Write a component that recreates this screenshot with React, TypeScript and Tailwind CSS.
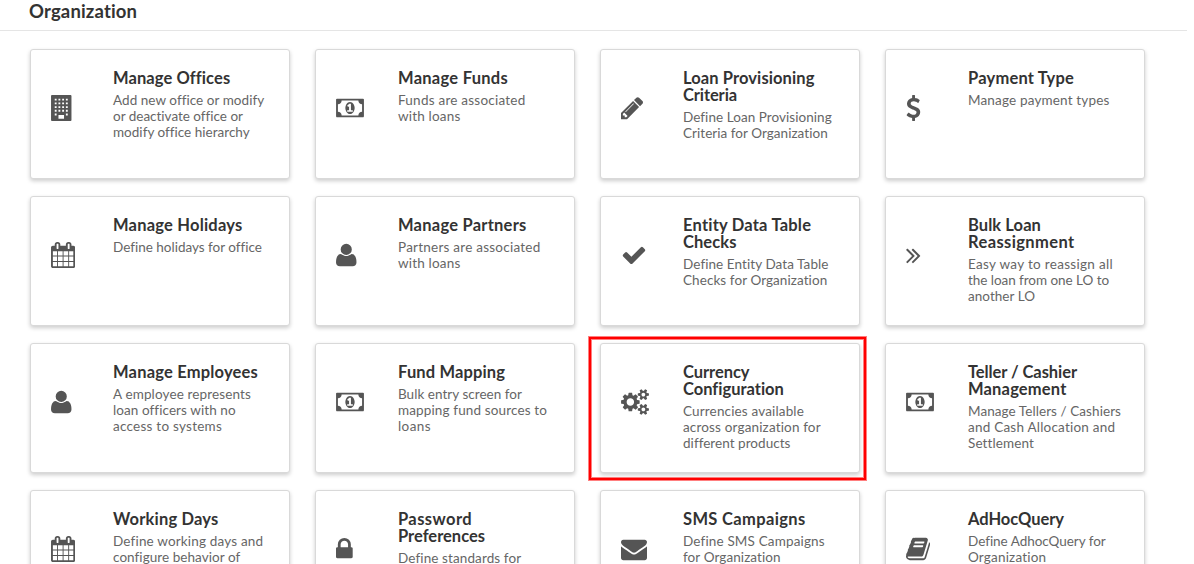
import { useLayoutEffect, useRef } from "react";

type Line = [text: string, width: number];
type IconName = keyof typeof glyphs;
type Item = { icon: IconName; title: Line[]; body: Line[]; marked?: boolean };

const glyphs = {
  building: {
    box: "0 0 1408 1792",
    width: "w-[20.5px]",
    d: "M64 0h1280q64 0 64 64v1664q0 64-64 64h-1280q-64 0-64-64v-1664q0-64 64-64zM256 256v128h128v-128zM512 256v128h128v-128zM768 256v128h128v-128zM1024 256v128h128v-128zM256 512v128h128v-128zM512 512v128h128v-128zM768 512v128h128v-128zM1024 512v128h128v-128zM256 768v128h128v-128zM512 768v128h128v-128zM768 768v128h128v-128zM1024 768v128h128v-128zM256 1024v128h128v-128zM512 1024v128h128v-128zM768 1024v128h128v-128zM1024 1024v128h128v-128zM256 1280v128h128v-128zM1024 1280v128h128v-128zM512 1376v256h384v-256z",
  },
  money: {
    box: "0 128 1920 1792",
    width: "w-[28px]",
    d: "M768 1280h384v-96h-128v-448h-114l-148 137 77 80q42-37 55-57h2v288h-128v96zm512-256q0 70-21 142t-59.5 134-101.5 101-138 39-138-39-101.5-101-59.5-134-21-142 21-142 59.5-134 101.5-101 138-39 138 39 101.5 101 59.5 134 21 142zm512 256v-512q-106 0-181-75t-75-181h-1152q0 106-75 181t-181 75v512q106 0 181 75t75 181h1152q0-106 75-181t181-75zm128-832v1152q0 26-19 45t-45 19h-1792q-26 0-45-19t-19-45v-1152q0-26 19-45t45-19h1792q26 0 45 19t19 45z",
  },
  pencil: {
    box: "128 0 1536 1792",
    width: "w-[22.3px]",
    d: "M491 1536l91-91-235-235-91 91v107h128v128h107zm523-928q0-22-22-22-10 0-17 7l-542 542q-7 7-7 17 0 22 22 22 10 0 17-7l542-542q7-7 7-17zm-54-192l416 416-832 832h-416v-416zm683 96q0 53-37 90l-166 166-416-416 166-165q36-38 90-38 53 0 91 38l235 234q37 39 37 91z",
  },
  dollar: {
    box: "384 0 1024 1792",
    width: "w-[14.9px]",
    d: "M1362 1185q0 153-99.5 263.5t-258.5 136.5v175q0 14-9 23t-23 9h-135q-13 0-22.5-9.5t-9.5-22.5v-175q-66-9-127.5-31t-101.5-44.5-74-48-46.5-37.5-17.5-18q-17-21-2-41l103-135q7-10 23-12 15-2 24 9l2 2q113 99 243 125 37 8 74 8 81 0 142.5-43t61.5-122q0-28-15-53t-33.5-42-58.5-37.5-66-32-80-32.5q-39-16-61.5-25t-61.5-26.5-62.5-31-56.5-35.5-53.5-42.5-43.5-49-35.5-58-21-66.5-8.5-78q0-138 98-242t255-134v-180q0-13 9.5-22.5t22.5-9.5h135q14 0 23 9t9 23v176q57 6 110.5 23t87 33.5 63.5 37.5 39 29 15 14q17 18 5 38l-81 146q-8 15-23 16-14 3-27-7-3-3-14.5-12t-39-26.5-58.5-32-74.5-26-85.5-11.5q-95 0-155 43t-60 111q0 26 8.5 48t29.5 41.5 39.5 33 56 31 60.5 27 70 27.5q53 20 81 31.5t76 35 75.5 42.5 62 50 53 63.5 31.5 76.5 13 94z",
  },
  calendar: {
    box: "64 0 1664 1792",
    width: "w-[24.2px]",
    d: "M192 1664h288v-288h-288v288zm352 0h320v-288h-320v288zm-352-352h288v-320h-288v320zm352 0h320v-320h-320v320zm-352-384h288v-288h-288v288zm736 736h320v-288h-320v288zm-384-736h320v-288h-320v288zm768 736h288v-288h-288v288zm-384-352h320v-320h-320v320zm-352-864v-288q0-13-9.5-22.5t-22.5-9.5h-64q-13 0-22.5 9.5t-9.5 22.5v288q0 13 9.5 22.5t22.5 9.5h64q13 0 22.5-9.5t9.5-22.5zm736 864h288v-320h-288v320zm-384-384h320v-288h-320v288zm384 0h288v-288h-288v288zm32-480v-288q0-13-9.5-22.5t-22.5-9.5h-64q-13 0-22.5 9.5t-9.5 22.5v288q0 13 9.5 22.5t22.5 9.5h64q13 0 22.5-9.5t9.5-22.5zm384-64v1280q0 52-38 90t-90 38h-1408q-52 0-90-38t-38-90v-1280q0-52 38-90t90-38h128v-96q0-66 47-113t113-47h64q66 0 113 47t47 113v96h384v-96q0-66 47-113t113-47h64q66 0 113 47t47 113v96h128q52 0 90 38t38 90z",
  },
  user: {
    box: "192 0 1408 1792",
    width: "w-[20.5px]",
    d: "M1600 1405q0 120-73 189.5t-194 69.5h-874q-121 0-194-69.5t-73-189.5q0-53 3.5-103.5t14-109 26.5-108.5 43-97.5 62-81 85.5-53.5 111.5-20q9 0 42 21.5t74.5 48 108 48 133.5 21.5 133.5-21.5 108-48 74.5-48 42-21.5q61 0 111.5 20t85.5 53.5 62 81 43 97.5 26.5 108.5 14 109 3.5 103.5zm-320-893q0 159-112.5 271.5t-271.5 112.5-271.5-112.5-112.5-271.5 112.5-271.5 271.5-112.5 271.5 112.5 112.5 271.5z",
  },
  check: {
    box: "0 0 1792 1792",
    width: "w-[26px]",
    d: "M1671 566q0 40-28 68l-724 724-136 136q-28 28-68 28t-68-28l-136-136-362-362q-28-28-28-68t28-68l136-136q28-28 68-28t68 28l294 295 656-657q28-28 68-28t68 28l136 136q28 28 28 68z",
  },
  chevrons: {
    box: "384 0 1024 1792",
    width: "w-[14.9px]",
    d: "M979 960q0 13-10 23l-466 466q-10 10-23 10t-23-10l-50-50q-10-10-10-23t10-23l393-393-393-393q-10-10-10-23t10-23l50-50q10-10 23-10t23 10l466 466q10 10 10 23zm384 0q0 13-10 23l-466 466q-10 10-23 10t-23-10l-50-50q-10-10-10-23t10-23l393-393-393-393q-10-10-10-23t10-23l50-50q10-10 23-10t23 10l466 466q10 10 10 23z",
  },
  cogs: {
    box: "0 0 1920 1792",
    width: "w-[28px]",
    d: "M896 896q0-106-75-181t-181-75-181 75-75 181 75 181 181 75 181-75 75-181zm768 512q0-52-38-90t-90-38-90 38-38 90q0 53 37.5 90.5t90.5 37.5 90.5-37.5 37.5-90.5zm0-1024q0-52-38-90t-90-38-90 38-38 90q0 53 37.5 90.5t90.5 37.5 90.5-37.5 37.5-90.5zm-384 421v185q0 10-7 19.5t-16 10.5l-155 24q-11 35-32 76 34 48 90 115 7 11 7 20 0 12-7 19-23 30-82.5 89.5t-78.5 59.5q-11 0-21-7l-115-90q-37 19-77 31-11 108-23 155-7 24-30 24h-186q-11 0-20-7.5t-10-17.5l-23-153q-34-10-75-31l-118 89q-7 7-20 7-11 0-21-8-144-133-144-160 0-9 7-19 10-14 41-53t47-61q-23-44-35-82l-152-24q-10-1-17-9.5t-7-19.5v-185q0-10 7-19.5t16-10.5l155-24q11-35 32-76-34-48-90-115-7-11-7-20 0-12 7-20 22-30 82-89t79-59q11 0 21 7l115 90q34-18 77-32 11-108 23-154 7-24 30-24h186q11 0 20 7.5t10 17.5l23 153q34 10 75 31l118-89q8-7 20-7 11 0 21 8 144 133 144 160 0 8-7 19-12 16-42 54t-45 60q23 48 34 82l152 23q10 2 17 10.5t7 19.5zm640 533v140q0 16-149 31-12 27-30 52 51 113 51 138 0 4-4 7-122 71-124 71-8 0-46-47t-52-68q-20 2-30 2t-30-2q-14 21-52 68t-46 47q-2 0-124-71-4-3-4-7 0-25 51-138-18-25-30-52-149-15-149-31v-140q0-16 149-31 13-29 30-52-51-113-51-138 0-4 4-7 4-2 35-20t59-34 30-16q8 0 46 46.5t52 67.5q20-2 30-2t30 2q51-71 92-112l6-2q4 0 124 70 4 3 4 7 0 25-51 138 17 23 30 52 149 15 149 31zm0-1024v140q0 16-149 31-12 27-30 52 51 113 51 138 0 4-4 7-122 71-124 71-8 0-46-47t-52-68q-20 2-30 2t-30-2q-14 21-52 68t-46 47q-2 0-124-71-4-3-4-7 0-25 51-138-18-25-30-52-149-15-149-31v-140q0-16 149-31 13-29 30-52-51-113-51-138 0-4 4-7 4-2 35-20t59-34 30-16q8 0 46 46.5t52 67.5q20-2 30-2t30 2q51-71 92-112l6-2q4 0 124 70 4 3 4 7 0 25-51 138 17 23 30 52 149 15 149 31z",
  },
  lock: {
    box: "320 0 1152 1792",
    width: "w-[16.7px]",
    d: "M640 768h512v-192q0-106-75-181t-181-75-181 75-75 181v192zm832 96v576q0 40-28 68t-68 28h-960q-40 0-68-28t-28-68v-576q0-40 28-68t68-28h32v-192q0-184 132-316t316-132 316 132 132 316v192h32q40 0 68 28t28 68z",
  },
  envelope: {
    box: "0 0 1792 1792",
    width: "w-[26px]",
    d: "M1792 710v794q0 66-47 113t-113 47h-1472q-66 0-113-47t-47-113v-794q44 49 101 87 362 246 497 345 57 42 92.5 65.5t94.5 48 110 24.5h2q51 0 110-24.5t94.5-48 92.5-65.5q170-123 498-345 57-39 100-87zm0-294q0 79-49 151t-122 123q-376 261-468 325-10 7-42.5 31t-54 38.5-52 32.5-57.5 27-50 9h-2q-23 0-50-9t-57.5-27-52-32.5-54-38.5-42.5-31q-91-64-262-182.5t-205-142.5q-62-42-117-115.5t-55-136.5q0-78 41.5-130t118.5-52h1472q65 0 112.5 47t47.5 113z",
  },
  book: {
    box: "64 0 1664 1792",
    width: "w-[24.2px]",
    d: "M1703 478q40 57 18 129l-275 906q-19 64-76.5 107.5t-122.5 43.5h-923q-77 0-148.5-53.5t-99.5-131.5q-24-67-2-127 0-4 3-27t4-37q1-8-3-21.5t-3-19.5q2-11 8-21t16.5-23.5 16.5-23.5q23-38 45-91.5t30-91.5q3-10 .5-30t-.5-28q3-11 17-28t17-23q21-36 42-92t25-90q1-9-2.5-32t.5-28q4-13 22-30.5t22-22.5q19-26 42.5-84.5t27.5-96.5q1-8-3-25.5t-2-26.5q2-8 9-18t18-23 17-21q8-12 16.5-30.5t15-35 16-36 19.5-32 26.5-23.5 36-11.5 47.5 5.5l-1 3q38-9 51-9h761q74 0 114 56t18 130l-274 906q-36 119-71.5 153.5t-128.5 34.5h-869q-27 0-38 15-11 16-1 43 24 70 144 70h923q29 0 56-15.5t35-41.5l300-987q7-22 5-57 38 15 59 43zm-1064 2q-4 13 2 22.5t20 9.5h608q13 0 25.5-9.5t16.5-22.5l21-64q4-13-2-22.5t-20-9.5h-608q-13 0-25.5 9.5t-16.5 22.5zm-83 256q-4 13 2 22.5t20 9.5h608q13 0 25.5-9.5t16.5-22.5l21-64q4-13-2-22.5t-20-9.5h-608q-13 0-25.5 9.5t-16.5 22.5z",
  },
};

const items: Item[] = [
  { icon: "building", title: [["Manage Offices", 116.5]], body: [["Add new office or modify", 150.5], ["or deactivate office or", 129.5], ["modify office hierarchy", 136]] },
  { icon: "money", title: [["Manage Funds", 110]], body: [["Funds are associated", 127.5], ["with loans", 62.5]] },
  { icon: "pencil", title: [["Loan Provisioning", 131.5], ["Criteria", 54]], body: [["Define Loan Provisioning", 148.5], ["Criteria for Organization", 145]] },
  { icon: "dollar", title: [["Payment Type", 106]], body: [["Manage payment types", 141.5]] },
  { icon: "calendar", title: [["Manage Holidays", 129.5]], body: [["Define holidays for office", 148]] },
  { icon: "user", title: [["Manage Partners", 128.5]], body: [["Partners are associated", 142.5], ["with loans", 62.5]] },
  { icon: "check", title: [["Entity Data Table", 128.5], ["Checks", 53.5]], body: [["Define Entity Data Table", 145.5], ["Checks for Organization", 144.5]] },
  { icon: "chevrons", title: [["Bulk Loan", 73], ["Reassignment", 106.5]], body: [["Easy way to reassign all", 145], ["the loan from one LO to", 141], ["another LO", 67]] },
  { icon: "user", title: [["Manage Employees", 145]], body: [["A employee represents", 138], ["loan officers with no", 122], ["access to systems", 109]] },
  { icon: "money", title: [["Fund Mapping", 107]], body: [["Bulk entry screen for", 124], ["mapping fund sources to", 149], ["loans", 33]] },
  { icon: "cogs", title: [["Currency", 66.5], ["Configuration", 101]], body: [["Currencies available", 121], ["across organization for", 138], ["different products", 107]], marked: true },
  { icon: "money", title: [["Teller / Cashier", 109], ["Management", 98.5]], body: [["Manage Tellers / Cashiers", 153], ["and Cash Allocation and", 147.5], ["Settlement", 65.5]] },
  { icon: "calendar", title: [["Working Days", 105.5]], body: [["Define working days and", 150], ["configure behavior of", 127]] },
  { icon: "lock", title: [["Password", 74], ["Preferences", 87]], body: [["Define standards for", 123]] },
  { icon: "envelope", title: [["SMS Campaigns", 122.5]], body: [["Define SMS Campaigns", 141.5], ["for Organization", 98]] },
  { icon: "book", title: [["AdHocQuery", 96]], body: [["Define AdhocQuery for", 137.5], ["Organization", 78.5]] },
];

/** One line of text whose tracking is adjusted to fill the given width. */
function FittedLine({ text, width }: { text: string; width: number }) {
  const ref = useRef<HTMLSpanElement>(null);
  useLayoutEffect(() => {
    const el = ref.current;
    if (!el) return;
    el.style.letterSpacing = "0px";
    const natural = el.getBoundingClientRect().width;
    el.style.letterSpacing = `${(width - natural) / text.length}px`;
  }, [text, width]);
  return (
    <span className="block">
      <span ref={ref} className="whitespace-nowrap">{text}</span>
    </span>
  );
}

function Icon({ name }: { name: IconName }) {
  const g = glyphs[name];
  return (
    <svg viewBox={g.box} className={`h-[26px] fill-[#555] ${g.width}`} fillRule="evenodd" aria-hidden="true">
      <path d={g.d} />
    </svg>
  );
}

function Card({ item }: { item: Item }) {
  return (
    <div className="relative flex h-[130px] rounded-[3px] border border-[#d9d9d9] bg-white shadow-[0_2px_4px_rgba(0,0,0,0.2)]">
      <div className="w-[82px] shrink-0 pt-[45px] pl-5">
        <Icon name={item.icon} />
      </div>
      <div className="pt-5">
        <h2 className="text-[16.5px] leading-[17px] font-bold text-[#333]">
          {item.title.map(([text, width]) => <FittedLine key={text} text={text} width={width} />)}
        </h2>
        <p className="mt-[5px] text-[13.5px] leading-4 text-[#666]">
          {item.body.map(([text, width]) => <FittedLine key={text} text={text} width={width} />)}
        </p>
      </div>
      {item.marked && (
        <div className="absolute -top-[7px] -left-[12px] h-[143px] w-[277px] border-2 border-[#ff0000] shadow-[0_0_0_1px_rgba(255,0,0,0.5),inset_0_0_0_1px_rgba(255,0,0,0.5)]" />
      )}
    </div>
  );
}

export default function App() {
  return (
    <main className="h-[564px] w-[1194px] overflow-hidden bg-white font-[Lato,sans-serif]">
      <header className="h-[31px] w-[1187px] border-b border-[#e5e5e5] pl-[29px]">
        <h1 className="text-[18.5px] leading-[22px] font-bold text-[#333]">
          <FittedLine text="Organization" width={108.5} />
        </h1>
      </header>
      <section className="grid grid-cols-[repeat(4,260px)] gap-x-[25px] gap-y-[17px] pt-[18px] pl-[30px]">
        {items.map((item) => <Card key={item.title[0][0]} item={item} />)}
      </section>
    </main>
  );
}
